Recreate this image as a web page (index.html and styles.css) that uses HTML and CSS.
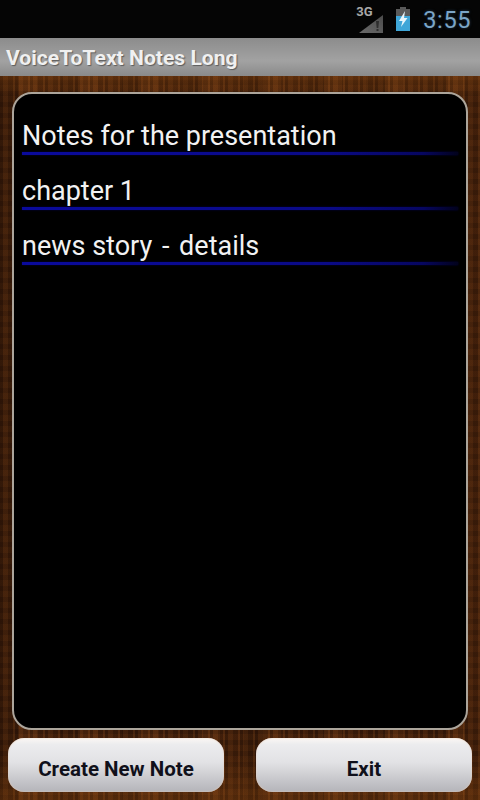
FILE: index.html
```html
<!DOCTYPE html>
<html lang="en">
<head>
<meta charset="utf-8">
<title>VoiceToText Notes Long</title>
<link rel="stylesheet" href="styles.css">
</head>
<body>
<div class="app">
  <header class="status">
    <div class="signal">
      <span class="net">3G</span>
      <svg class="signal-icon" width="24" height="18" viewBox="0 0 24 18"><defs><linearGradient id="sig" x1="1" y1="0" x2="0" y2="1"><stop offset="0" stop-color="#4c4c4c"/><stop offset="1" stop-color="#6a6a6a"/></linearGradient></defs><path d="M24 0V18H0Z" fill="url(#sig)"/><path d="M17 6h3l-.7 7h-1.600zM17.500 14h2v2h-2z" fill="#2e2e2e"/></svg>
    </div>
    <svg class="battery" width="18" height="26" viewBox="0 0 18 26"><path d="M6 1h6v2h4v22H2V3h4z" fill="#5a5a5a"/><path d="M2 10h14v15H2z" fill="#3fa6d8"/><path d="M11 5L5 15h3.500L7 21l6.500-9H10z" fill="#e8f6fc"/></svg>
    <span class="clock">3:55</span>
  </header>
  <div class="titlebar">VoiceToText Notes Long</div>
  <main class="wood">
    <section class="panel">
      <div class="note">Notes for the presentation</div>
      <div class="note">chapter 1</div>
      <div class="note">news story <span class="dash">-</span> details</div>
    </section>
    <div class="actions">
      <button class="btn">Create New Note</button>
      <button class="btn">Exit</button>
    </div>
  </main>
</div>
</body>
</html>
```
FILE: styles.css
```css
* { box-sizing: border-box; }
html, body { margin: 0; padding: 0; }
body { width: 480px; height: 800px; overflow: hidden; background: #000; font-family: Roboto, sans-serif; }
.app { width: 480px; height: 800px; display: flex; flex-direction: column; }
.status { height: 38px; flex: none; background: #050505; display: flex; align-items: center; justify-content: flex-end; padding-right: 9px; }
.signal { position: relative; width: 28px; height: 28px; margin-right: 11px; }
.net { position: absolute; left: 1px; top: -1px; font-size: 13px; font-weight: 700; color: #a8a8a8; }
.signal-icon { position: absolute; right: 0; bottom: 0; }
.battery { margin-right: 11px; }
.clock { font-size: 23.500px; color: #7ba5c6; letter-spacing: 0.6px; padding-top: 2px; text-shadow: 0 0 3px #1d3a52; }
.titlebar { height: 38px; flex: none; background: linear-gradient(#8c8c8c, #a2a2a2 60%, #8a8a8a); color: #f0f0f0; font-size: 21.100px; font-weight: 700; line-height: 40px; padding-left: 6px; text-shadow: 1px 1px 1px #5c5c5c; white-space: nowrap; }
.wood {
  flex: 1; display: flex; flex-direction: column; padding: 16px 8px 8px;
  background-color: #431f0a;
  background-image:
    linear-gradient(rgba(190,100,20,.22), rgba(190,100,20,0) 3%, rgba(0,0,0,0) 94%, rgba(190,100,20,.2)),
    repeating-linear-gradient(90deg, rgba(0,0,0,.16) 0 3px, rgba(255,150,60,.05) 3px 8px, rgba(0,0,0,.08) 8px 13px, rgba(255,150,60,.09) 13px 15px),
    repeating-linear-gradient(90deg, rgba(0,0,0,.16) 0 19px, rgba(255,150,60,.06) 19px 37px, rgba(0,0,0,.05) 37px 61px),
    repeating-linear-gradient(0deg, rgba(0,0,0,.07) 0 5px, rgba(255,150,60,.03) 5px 11px);
}
.panel { height: 638px; margin: 0 4px; background: #000; border: 2px solid #aca59b; border-radius: 20px; padding: 7px 8px 0; flex: none; }
.note { height: 55px; padding-top: 19px; color: #f2f2f2; font-size: 27px; line-height: 32px; white-space: nowrap; position: relative; }
.note::after { content: ""; position: absolute; left: 0; right: 0; bottom: 1px; height: 3px; background: linear-gradient(90deg, #0a0a9c, #0a0a86 70%, #060660 92%, #02021c); box-shadow: 0 0 2px #00004c; }
.dash { padding: 0 3px; }
.actions { display: flex; justify-content: space-between; margin-top: 8px; }
.btn { width: 216px; height: 54px; border: 0; border-radius: 16px; background: linear-gradient(#fbf7f4, #ececee 12%, #e2e2e5 45%, #b4b4b9); box-shadow: inset 0 0 2px #e9cdb9; color: #10101a; font-family: Roboto, sans-serif; font-size: 20.500px; font-weight: 700; padding: 8px 0 0; }
```
